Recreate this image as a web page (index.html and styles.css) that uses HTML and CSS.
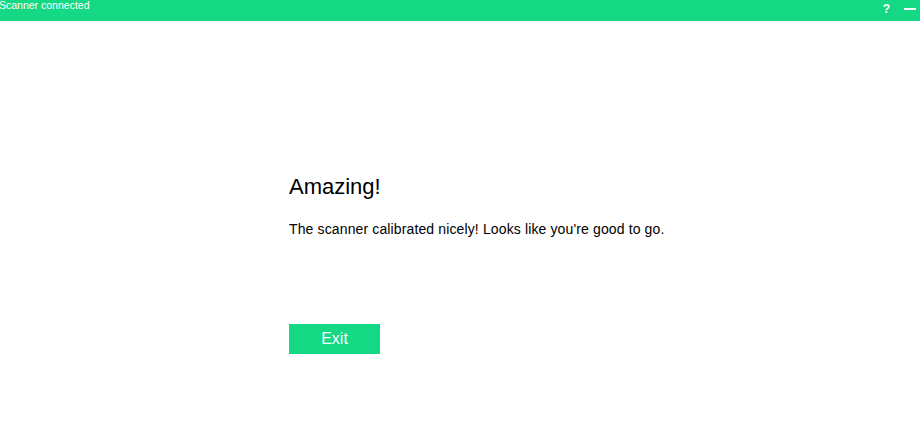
FILE: index.html
```html
<!DOCTYPE html>
<html lang="en">
<head>
    <meta charset="UTF-8">
    <title>Scanner calibration</title>
    <link rel="stylesheet" href="styles.css">
</head>
<body>
    <div class="topbar">
        <span class="status">Scanner connected</span>
        <div class="controls">
            <span class="help">?</span>
            <span class="minimize"></span>
        </div>
    </div>
    <div class="content">
        <h1 class="title">Amazing!</h1>
        <p class="message">The scanner calibrated nicely! Looks like you're good to go.</p>
        <button class="exit_btn">Exit</button>
    </div>
</body>
</html>
```

FILE: styles.css
```css
body { margin: 0; font-family: "Liberation Sans", Arial, sans-serif; background: #fff; color: #000; }
.topbar { display: flex; align-items: flex-start; height: 21px; background: #14d884; color: #fff; }
.status { flex: 1; font-size: 10.5px; line-height: 11px; margin-left: -1px; }
.controls { display: flex; align-items: flex-start; gap: 14px; padding-right: 4px; }
.help { font-size: 12px; font-weight: 700; line-height: 12px; margin-top: 3px; }
.minimize { width: 12px; height: 2px; background: #fff; margin-top: 8px; }
.content { padding: 153px 0 0 289px; }
.title { margin: 0; font-size: 22px; font-weight: 400; line-height: 25px; }
.message { margin: 22px 0 0; font-size: 14px; line-height: 16px; letter-spacing: 0.13px; }
.exit_btn { display: block; margin-top: 87px; width: 91px; height: 30px; padding: 0; border: none; background: #14d884; color: #fff; font-family: "Liberation Sans", Arial, sans-serif; font-size: 16px; cursor: pointer; }
```
